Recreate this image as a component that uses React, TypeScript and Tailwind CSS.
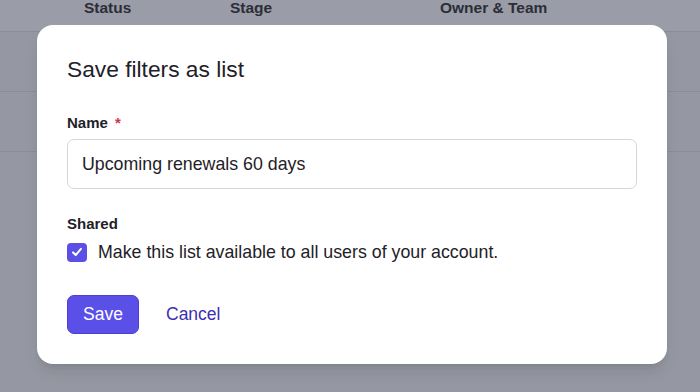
import { useState } from 'react'

function Check() {
  return (
    <svg viewBox="0 0 16 16" className="w-[14px] h-[14px]" fill="none">
      <path d="M3.5 8.5l3 3 6-7" stroke="white" strokeWidth="2.3" strokeLinecap="round" strokeLinejoin="round" />
    </svg>
  )
}

export default function App() {
  const [shared, setShared] = useState(true)
  const [name, setName] = useState('Upcoming renewals 60 days')

  return (
    <div className="relative w-[700px] h-[392px] overflow-hidden bg-[#9598a2] font-['Liberation_Sans',Arial,sans-serif]">
      {/* table behind the overlay */}
      <div className="h-[32px] bg-[#9a9ca7] border-b border-[#8a8d97] flex text-[15.5px] font-bold text-[#2c2e37] leading-[16px]">
        <span className="ml-[84px] w-[146px]">Status</span>
        <span className="w-[210px]">Stage</span>
        <span>Owner &amp; Team</span>
      </div>
      <div className="h-[60px] border-b border-[#8a8d97]" />
      <div className="h-[60px] border-b border-[#8a8d97]" />

      {/* modal */}
      <div className="absolute left-[37px] top-[25px] w-[630px] h-[339px] bg-white rounded-[16px] shadow-lg px-[30px] pt-[30px] flex flex-col">
        <h2 className="text-[22.75px] leading-[28px] text-[#1f2128]">Save filters as list</h2>

        <label className="mt-[30px] text-[15px] leading-[20px] font-semibold text-[#1f2128]">
          Name <span className="text-[#d0364b] ml-[3px]">*</span>
        </label>
        <input
          value={name}
          onChange={(e) => setName(e.target.value)}
          className="mt-[6px] h-[50px] w-full rounded-[7px] border border-[#d6d7db] px-[14px] pt-[1px] text-[17.8px] text-[#1f2128] outline-none"
        />

        <div className="mt-[25px] text-[15px] leading-[20px] font-semibold text-[#1f2128]">Shared</div>
        <label className="mt-[6px] flex items-center cursor-pointer">
          <button
            type="button"
            onClick={() => setShared(!shared)}
            className="w-[20px] h-[19px] rounded-[4px] bg-[#5a50e6] flex items-center justify-center"
          >
            {shared && <Check />}
          </button>
          <span className="ml-[11px] text-[17.8px] leading-[24px] text-[#1f2128]">
            Make this list available to all users of your account.
          </span>
        </label>

        <div className="mt-[31px] flex items-center">
          <button className="w-[72px] h-[39px] rounded-[7px] bg-[#5a50e8] border border-[#4a40d2] text-white text-[17.5px]">
            Save
          </button>
          <button className="ml-[27px] text-[17.5px] text-[#3b2fb3]">Cancel</button>
        </div>
      </div>
    </div>
  )
}
